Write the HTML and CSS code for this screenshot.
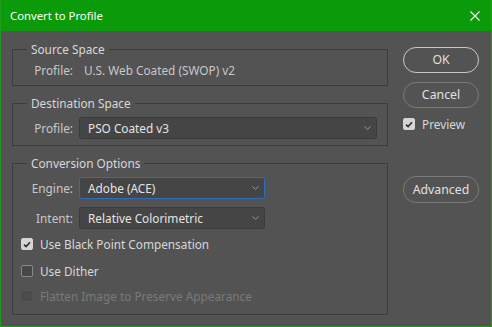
FILE: index.html
```html
<!DOCTYPE html>
<html>
<head>
<meta charset="utf-8">
<link rel="stylesheet" href="styles.css">
</head>
<body>
<div class="window">
  <div class="titlebar">
    <span class="title">Convert to Profile</span>
    <svg class="close" width="10" height="10" viewBox="0 0 10 10"><path d="M0.5 0.5 L9.5 9.5 M9.5 0.5 L0.5 9.5" stroke="#ffffff" stroke-width="1.1" fill="none"/></svg>
  </div>
  <div class="content">
    <div class="left">
      <fieldset class="group g-source">
        <legend>Source Space</legend>
        <div class="row row-text"><span class="label">Profile:</span><span class="value">U.S. Web Coated (SWOP) v2</span></div>
      </fieldset>
      <fieldset class="group g-dest">
        <legend>Destination Space</legend>
        <div class="row"><span class="label">Profile:</span>
          <div class="select wide"><span>PSO Coated v3</span><svg class="chev" width="7" height="4" viewBox="0 0 7 4"><path d="M0.5 0.5 L3.5 3.3 L6.5 0.5" stroke="#9a9a9a" stroke-width="1" fill="none"/></svg></div>
        </div>
      </fieldset>
      <fieldset class="group g-conv">
        <legend>Conversion Options</legend>
        <div class="row"><span class="label">Engine:</span>
          <div class="select narrow focus"><span>Adobe (ACE)</span><svg class="chev" width="7" height="4" viewBox="0 0 7 4"><path d="M0.5 0.5 L3.5 3.3 L6.5 0.5" stroke="#9a9a9a" stroke-width="1" fill="none"/></svg></div>
        </div>
        <div class="row row-intent"><span class="label">Intent:</span>
          <div class="select narrow"><span>Relative Colorimetric</span><svg class="chev" width="7" height="4" viewBox="0 0 7 4"><path d="M0.5 0.5 L3.5 3.3 L6.5 0.5" stroke="#9a9a9a" stroke-width="1" fill="none"/></svg></div>
        </div>
        <div class="check c1"><span class="box checked"><svg width="8" height="7" viewBox="0 0 8 7"><path d="M1 3.6 L3.1 5.6 L7 1.2" stroke="#2e2e2e" stroke-width="1.6" fill="none"/></svg></span><span>Use Black Point Compensation</span></div>
        <div class="check c2"><span class="box"></span><span>Use Dither</span></div>
        <div class="check c3 disabled"><span class="box"></span><span>Flatten Image to Preserve Appearance</span></div>
      </fieldset>
    </div>
    <div class="right">
      <div class="btn primary">OK</div>
      <div class="btn cancel">Cancel</div>
      <div class="check preview"><span class="box checked"><svg width="8" height="7" viewBox="0 0 8 7"><path d="M1 3.6 L3.1 5.6 L7 1.2" stroke="#2e2e2e" stroke-width="1.6" fill="none"/></svg></span><span>Preview</span></div>
      <div class="btn advanced">Advanced</div>
    </div>
  </div>
</div>
</body>
</html>
```

FILE: styles.css
```css
* { box-sizing: border-box; }
html, body { margin: 0; padding: 0; }
body {
  font-family: "Noto Sans", "Open Sans", sans-serif;
  font-size: 11.8px;
  background: #535353;
}
.window {
  width: 492px;
  height: 327px;
  border: 1px solid #1f9a1f;
  border-top: none;
  background: #535353;
  display: flex;
  flex-direction: column;
}
.titlebar {
  height: 31px;
  background: #0a9a0a;
  display: flex;
  align-items: center;
  justify-content: space-between;
  padding: 0 11px 0 9px;
}
.title {
  color: #ffffff;
  font-size: 11.3px;
  line-height: 16px;
  padding-top: 1px;
}
.close { display: block; }
.content {
  display: flex;
  gap: 15px;
  padding-left: 11px;
}
.left {
  width: 376px;
  display: flex;
  flex-direction: column;
  gap: 9px;
  padding-top: 10px;
}
.group {
  margin: 0;
  min-width: 0;
  border: 1px solid #3d3d3d;
  padding: 0 8px;
}
.group legend {
  color: #d8d8d8;
  line-height: 16px;
  padding: 0 4px;
  margin-left: 6px;
}
.g-source { padding-bottom: 7px; }
.g-dest { padding-bottom: 6px; }
.g-conv { padding-bottom: 8px; }
.row {
  display: flex;
  align-items: center;
  gap: 6px;
  margin-top: 6px;
}
.row-text { margin-top: 5px; height: 16px; }
.row-intent { margin-top: 8px; }
.label {
  width: 52px;
  text-align: right;
  color: #c8c8c8;
  line-height: 16px;
}
.value {
  color: #c8c8c8;
  padding-left: 5px;
  line-height: 16px;
}
.select {
  height: 22px;
  background: #454545;
  border: 1px solid #3a3a3a;
  border-radius: 3px;
  display: flex;
  align-items: center;
  justify-content: space-between;
  padding: 0 5px 0 8px;
  color: #e4e4e4;
  line-height: 16px;
}
.select.wide { width: 298px; }
.select.narrow { width: 186px; }
.select.focus { border-color: #2f6bbd; }
.chev { display: block; }
.check {
  display: flex;
  align-items: center;
  gap: 7px;
  height: 20px;
  color: #d8d8d8;
  line-height: 16px;
}
.check .box {
  width: 12px;
  height: 12px;
  border-radius: 2px;
  border: 1px solid #8a8a8a;
  background: #474747;
  display: flex;
  align-items: center;
  justify-content: center;
}
.check .box.checked {
  background: #d6d6d6;
  border-color: #d6d6d6;
}
.c1 { margin-top: 5px; }
.c2 { margin-top: 7px; }
.c3 { margin-top: 5px; }
.check.disabled { color: #7a7a7a; }
.check.disabled .box { border-color: #545454; background: #4b4b4b; }
.right {
  width: 76px;
  display: flex;
  flex-direction: column;
  padding-top: 16px;
}
.btn {
  height: 26px;
  border-radius: 13px;
  border: 1px solid #7a7a7a;
  color: #e0e0e0;
  display: flex;
  align-items: center;
  justify-content: center;
  line-height: 16px;
  font-size: 12.3px;
}
.btn.primary { border: 1.5px solid #c9c9c9; }
.btn.cancel { margin-top: 9px; }
.check.preview { margin-top: 8px; height: 16px; gap: 7px; }
.btn.advanced { margin-top: 44px; height: 27px; }
```
